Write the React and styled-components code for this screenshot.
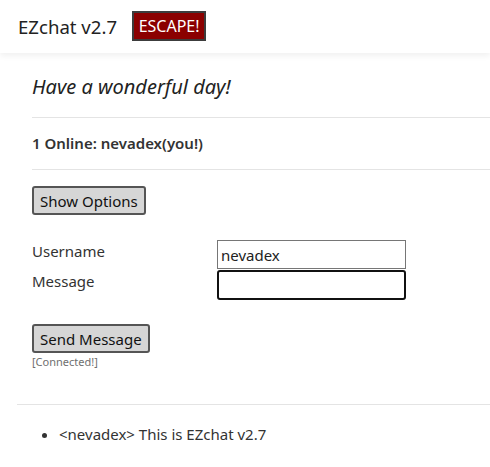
import React from "react";
import styled, { createGlobalStyle } from "styled-components";

const GlobalStyle = createGlobalStyle`
  html, body {
    margin: 0;
    padding: 0;
    background: #fff;
  }
  body {
    font-family: "Noto Sans", "Open Sans", sans-serif;
    color: #222;
  }
`;

export default function App() {
  return (
    <>
      <GlobalStyle />
      <Header>
        <Title>EZchat v2.7</Title>
        <EscapeButton>ESCAPE!</EscapeButton>
      </Header>
      <Page>
        <Panel>
          <Greeting>Have a wonderful day!</Greeting>
          <Rule />
          <Online>1 Online: nevadex(you!)</Online>
          <Rule />
          <Button>Show Options</Button>
          <Form>
            <Label>Username</Label>
            <Input defaultValue="nevadex" />
            <Label>Message</Label>
            <Input focused />
          </Form>
          <SendButton>Send Message</SendButton>
          <Status>[Connected!]</Status>
        </Panel>
        <Rule />
        <Messages>
          <li>&lt;nevadex&gt; This is EZchat v2.7</li>
        </Messages>
      </Page>
    </>
  );
}

const Header = styled.header`
  display: flex;
  align-items: center;
  height: 53px;
  padding-left: 18px;
  gap: 15px;
  box-shadow: 0 3px 6px rgba(0, 0, 0, 0.06);
  position: relative;
`;

const Title = styled.h1`
  margin: 0;
  font-size: 18.6px;
  font-weight: 400;
  color: #222;
`;

const EscapeButton = styled.button`
  width: 74px;
  height: 30px;
  padding: 0;
  background: #8b0000;
  color: #fff;
  border: 2px solid #3c3c3c;
  font-family: "Noto Sans", sans-serif;
  font-size: 16px;
  margin-top: -1px;
`;

const Page = styled.main`
  padding: 0 0 0 17px;
`;

const Panel = styled.section`
  padding: 20px 0 0 15px;
`;

const Greeting = styled.h2`
  margin: 0 0 16px;
  font-size: 20px;
  line-height: 28px;
  font-style: italic;
  font-weight: 400;
  color: #222;
`;

const Rule = styled.hr`
  margin: 0;
  border: 0;
  border-top: 1px solid #e4e4e4;
`;

const Online = styled.div`
  margin: 15px 0 15px;
  font-size: 15px;
  line-height: 21px;
  font-weight: 600;
  color: #333;
`;

const Button = styled.button`
  display: block;
  height: 29px;
  padding: 0 6px;
  margin-top: ${props => (props.$top ? props.$top : 16)}px;
  background: #d6d6d6;
  border: 2px solid #555;
  border-radius: 3px;
  font-family: "Noto Sans", sans-serif;
  font-size: 15px;
  color: #111;
`;

const SendButton = styled(Button).attrs({ $top: 24 })``;

const Form = styled.div`
  display: grid;
  grid-template-columns: 185px 189px;
  row-gap: 1px;
  margin-top: 25px;
`;

const Label = styled.label`
  font-size: 15px;
  line-height: 23px;
  color: #333;
`;

const Input = styled.input.attrs(props => ({ autoFocus: props.focused }))`
  box-sizing: border-box;
  height: ${props => (props.focused ? 30 : 29)}px;
  padding: 0 3px;
  border: ${props => (props.focused ? "2px solid #111" : "1px solid #767676")};
  border-radius: ${props => (props.focused ? 3 : 0)}px;
  font-family: "Noto Sans", sans-serif;
  font-size: 15px;
  color: #222;
  outline: none;
`;

const Status = styled.div`
  margin-top: 2px;
  font-size: 11px;
  line-height: 14px;
  color: #6f6f6f;
  padding-bottom: 35px;
`;

const Messages = styled.ul`
  margin: 18px 0 0;
  padding-left: 42px;
  font-size: 15px;
  line-height: 22px;
  color: #333;
`;
